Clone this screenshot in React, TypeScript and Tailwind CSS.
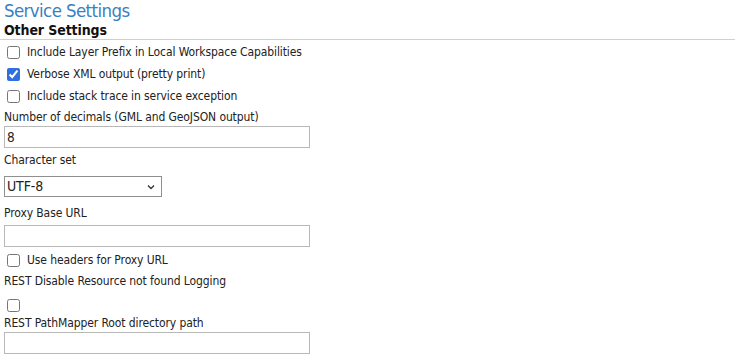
import { useState } from "react";

const body = "font-['Tahoma','DejaVu_Sans_Condensed','Liberation_Sans',sans-serif]";

function Check({ checked, label, h = "h-[22px]" }: { checked?: boolean; label?: string; h?: string }) {
  const [on, setOn] = useState(!!checked);
  return (
    <label className={`flex items-center ${h} pl-[7px] gap-[7px]`}>
      <input
        type="checkbox"
        checked={on}
        onChange={() => setOn(!on)}
        className="m-0 w-[13px] h-[13px] accent-[#2f6fe0]"
      />
      {label && <span>{label}</span>}
    </label>
  );
}

export default function App() {
  return (
    <div className={`${body} text-[12px] tracking-[-0.1px] text-[#222] bg-white w-[744px] h-[363px] overflow-hidden`}>
      <h1 className="font-['DejaVu_Sans_Condensed',sans-serif] text-[18.5px] leading-[22px] text-[#3a7fc1] pl-[4px] tracking-[-0.6px]">
        Service Settings
      </h1>
      <h2 className="font-['DejaVu_Sans_Condensed',sans-serif] font-bold text-[14px] leading-[16px] text-[#111] pl-[4px]">
        Other Settings
      </h2>
      <div className="mt-[1px] mr-[9px] border-t border-[#c8dca4]" />

      <div className="pt-[1px]">
        <Check label="Include Layer Prefix in Local Workspace Capabilities" />
        <Check checked label="Verbose XML output (pretty print)" />
        <Check label="Include stack trace in service exception" />
      </div>

      <div className="pl-[4px] mt-[2px] leading-[16px]">Number of decimals (GML and GeoJSON output)</div>
      <input
        defaultValue="8"
        className="block ml-[4px] mt-[1px] w-[306px] h-[22px] border border-[#b8b8b8] px-[2px] text-[13.5px] outline-none"
      />

      <div className="pl-[4px] mt-[4px] leading-[16px]">Character set</div>
      <div className="relative ml-[4px] mt-[8px] w-[158px] h-[21px] border border-[#8f8f8f] flex items-center px-[2px] text-[14px]">
        UTF-8
        <svg className="absolute right-[6px] top-[7px]" width="8" height="6" viewBox="0 0 8 6">
          <path d="M1 1.5 L4 4.5 L7 1.5" fill="none" stroke="#333" strokeWidth="1.3" />
        </svg>
      </div>

      <div className="pl-[4px] mt-[8px] leading-[16px]">Proxy Base URL</div>
      <input className="block ml-[4px] mt-[4px] w-[306px] h-[22px] border border-[#b8b8b8] outline-none" />

      <div className="mt-[2px]">
        <Check label="Use headers for Proxy URL" />
      </div>
      <div className="pl-[4px] mt-[2px] leading-[16px]">REST Disable Resource not found Logging</div>
      <div className="mt-[6px]">
        <Check h="h-[20px]" />
      </div>
      <div className="pl-[4px] leading-[16px]">REST PathMapper Root directory path</div>
      <input className="block ml-[4px] mt-[1px] w-[306px] h-[22px] border border-[#b8b8b8] outline-none" />
    </div>
  );
}
